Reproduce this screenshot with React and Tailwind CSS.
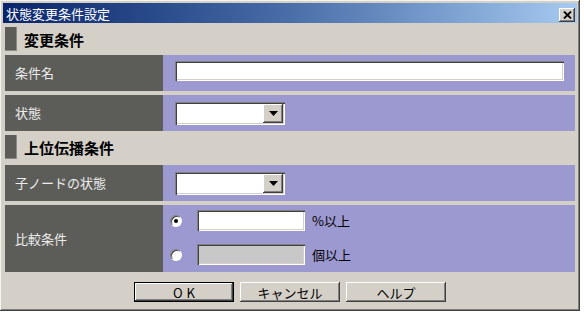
import React from 'react';

const font = { fontFamily: '"Noto Sans CJK JP", "Noto Sans", sans-serif' };

const sunken =
  'shadow-[inset_1px_1px_0_#808080,inset_2px_2px_0_#404040,inset_-1px_-1px_0_#ffffff,inset_-2px_-2px_0_#d4d0c8]';
const raised =
  'shadow-[inset_-1px_-1px_0_#404040,inset_1px_1px_0_#ffffff,inset_-2px_-2px_0_#808080,inset_2px_2px_0_#d4d0c8]';

function Section({ title, className }) {
  return (
    <div className={`flex items-start ${className}`}>
      <div className="flex items-center gap-[7px] mt-[4px]">
        <div className="w-[12px] h-[24px] bg-[#5c5d59] shadow-[inset_-1px_-1px_0_#8a8a86]" />
        <span className="text-[15px] font-bold text-black leading-none">{title}</span>
      </div>
    </div>
  );
}

function Select() {
  return (
    <div className={`w-[110px] h-[23px] bg-white ${sunken} flex items-center justify-end pr-[2px]`}>
      <div className={`w-[20px] h-[19px] bg-[#d4d0c8] ${raised} flex items-center justify-center`}>
        <svg width="9" height="5" viewBox="0 0 9 5">
          <path d="M0 0h9L4.5 5z" fill="#000" />
        </svg>
      </div>
    </div>
  );
}

function Row({ label, children, h = 'h-[36px]', className = '' }) {
  return (
    <div className={`flex ${h} ${className}`}>
      <div className="w-[158px] bg-[#5c5d59] flex items-center pl-[10px] text-[13px] text-[#ececec]">
        {label}
      </div>
      <div className="flex-1 bg-[#9b99cf] flex items-center pl-[12px]">{children}</div>
    </div>
  );
}

function Radio({ checked }) {
  return (
    <div className="w-[12px] h-[12px] rounded-full bg-white border border-t-[#808080] border-l-[#808080] border-b-[#ffffff] border-r-[#ffffff] shadow-[inset_1px_1px_0_#404040] flex items-center justify-center">
      {checked && <div className="w-[4px] h-[4px] rounded-full bg-black" />}
    </div>
  );
}

function Button({ children, def, wide }) {
  return (
    <button
      className={`w-[100px] h-[20px] bg-[#d4d0c8] ${def ? 'border border-black' : ''} ${raised} text-[13px] text-black leading-none ${wide ? 'tracking-[4px] pl-[4px]' : ''}`}
    >
      {children}
    </button>
  );
}

export default function App() {
  return (
    <div className="w-[584px] h-[316px] bg-white" style={font}>
      <div className="w-[580px] h-[311px] bg-[#d4d0c8] p-[3px] flex flex-col shadow-[inset_-1px_-1px_0_#404040,inset_1px_1px_0_#f4f4f0,inset_-2px_-2px_0_#808080]">
        <div className="h-[20px] flex items-center justify-between pl-[3px] pr-[2px] bg-gradient-to-r from-[#0a246a] via-[#4a6ea8] to-[#a6caf0]">
          <span className="text-[13px] text-white leading-none">状態変更条件設定</span>
          <div className={`w-[16px] h-[14px] mt-[3px] bg-[#d4d0c8] ${raised} flex items-center justify-center`}>
            <svg width="9" height="8" viewBox="0 0 9 8">
              <path d="M1 0.5l7 7M8 0.5l-7 7" stroke="#000" strokeWidth="1.8" />
            </svg>
          </div>
        </div>

        <div className="px-[2px] flex flex-col">
          <Section title="変更条件" className="h-[32px]" />
          <Row label="条件名" className="items-stretch">
            <div className={`w-[389px] h-[20px] bg-white ${sunken} self-start mt-[6px]`} />
          </Row>
          <Row label="状態" className="mt-[4px]">
            <Select />
          </Row>
          <Section title="上位伝播条件" className="h-[34px]" />
          <Row label="子ノードの状態">
            <Select />
          </Row>
          <div className="flex h-[67px] mt-[4px]">
            <div className="w-[158px] bg-[#5c5d59] flex items-center pl-[10px] text-[13px] text-[#ececec]">
              比較条件
            </div>
            <div className="flex-1 bg-[#9b99cf] flex flex-col pl-[7px] pt-[5px] gap-[13px]">
              <div className="flex items-center h-[21px]">
                <Radio checked />
                <div className={`ml-[15px] w-[108px] h-[21px] bg-white ${sunken}`} />
                <span className="ml-[7px] text-[13px] text-black">%以上</span>
              </div>
              <div className="flex items-center h-[21px]">
                <Radio />
                <div className={`ml-[15px] w-[108px] h-[21px] bg-[#c8c8c8] ${sunken}`} />
                <span className="ml-[7px] text-[13px] text-black">個以上</span>
              </div>
            </div>
          </div>
          <div className="flex justify-center gap-[6px] mt-[10px]">
            <Button def wide>OK</Button>
            <Button>キャンセル</Button>
            <Button>ヘルプ</Button>
          </div>
        </div>
      </div>
    </div>
  );
}
